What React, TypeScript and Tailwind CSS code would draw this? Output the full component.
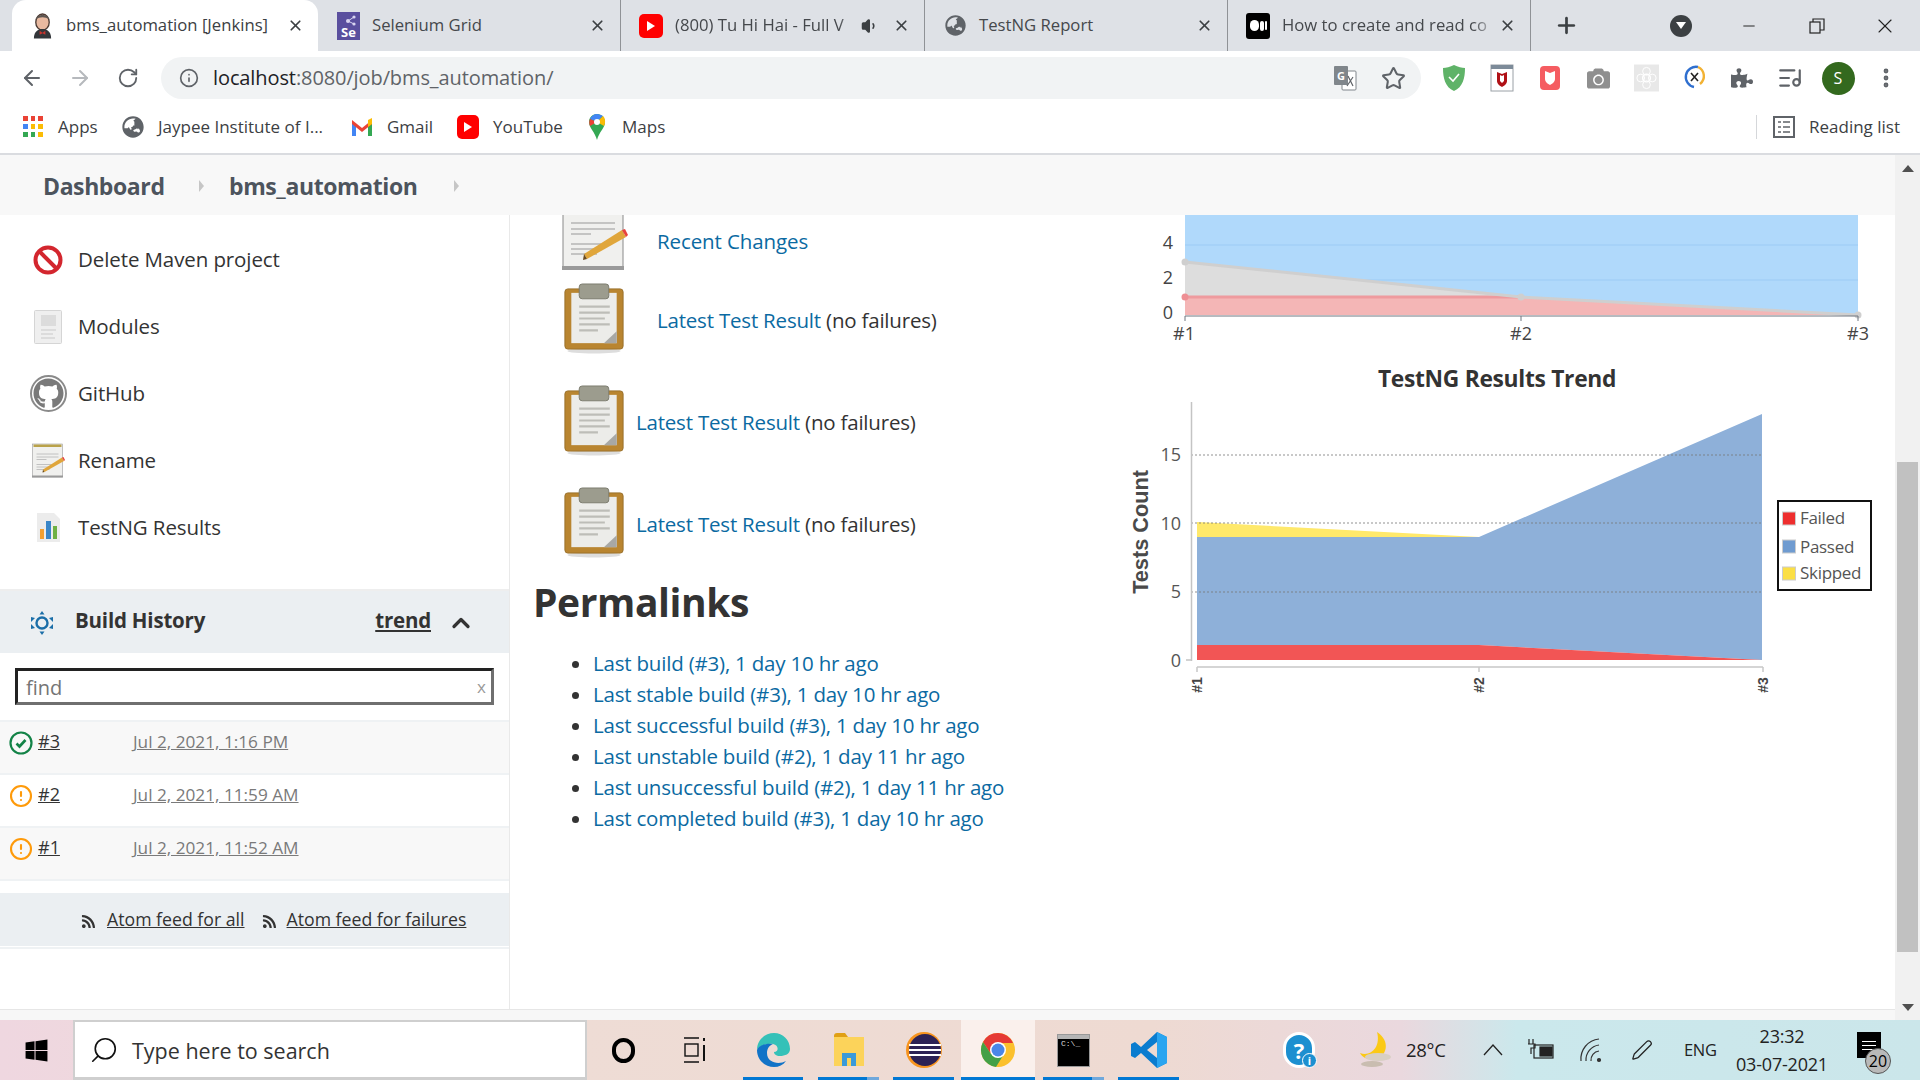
import { ReactNode } from 'react';
import {
  ArrowLeft,
  ArrowRight,
  ChevronUp,
  CircleAlert,
  EllipsisVertical,
  Info,
  ListMusic,
  Minus,
  Pen,
  Plus,
  RotateCw,
  Search,
  Star,
  Volume1,
  X,
} from 'lucide-react';
import { FaGithub, FaPuzzlePiece, FaRss, FaWindows, FaCamera, FaGlobeAsia } from 'react-icons/fa';

const JenkinsIcon = () => (
  <svg viewBox="0 0 24 26" className="w-[23px] h-[26px]">
    <ellipse cx="12" cy="9" rx="7" ry="8.5" fill="#e8b9a0" stroke="#4b3a33" strokeWidth="1.4" />
    <path d="M5 6 C6 0 18 0 19 6 C15 3 9 3 5 6Z" fill="#5c5550" />
    <path d="M3 26 C3 18 8 16 12 16 C16 16 21 18 21 26Z" fill="#33363a" />
    <path d="M9 18 L12 20 L15 18 L15 22 L12 20.5 L9 22Z" fill="#c8332d" />
  </svg>
);

const SeleniumIcon = () => (
  <svg viewBox="0 0 23 28" className="w-[23px] h-[28px]">
    <rect width="23" height="28" fill="#5a4f9e" />
    <path d="M11 9 L17 5 M11 9 L17 12" stroke="#d8d4f0" strokeWidth="1" />
    <circle cx="11" cy="9" r="2" fill="#d8d4f0" />
    <circle cx="17" cy="5" r="1.6" fill="#d8d4f0" />
    <circle cx="17" cy="12" r="1.6" fill="#d8d4f0" />
    <text x="11.5" y="25" fontSize="13" fontWeight="700" fill="#fff" textAnchor="middle">
      Se
    </text>
  </svg>
);

const YoutubeIcon = () => (
  <span className="w-[24px] h-[24px] rounded-[5px] bg-[#f00] flex items-center justify-center">
    <span className="w-0 h-0 border-y-[5px] border-y-transparent border-l-[8px] border-l-white" />
  </span>
);

const MediumIcon = () => (
  <span className="w-[24px] h-[26px] rounded-[3px] bg-black flex items-center justify-center gap-[1px]">
    <span className="w-[9px] h-[11px] rounded-full bg-white" />
    <span className="w-[4px] h-[10px] rounded-full bg-white" />
    <span className="w-[2px] h-[9px] rounded-full bg-white" />
  </span>
);

const GlobeIcon = ({ size = 22 }: { size?: number }) => <FaGlobeAsia size={size} color="#5f6368" />;

interface TabProps {
  title: string;
  icon: ReactNode;
  width: string;
  active?: boolean;
  audio?: boolean;
  fade?: boolean;
  divider?: boolean;
}

const Tab = ({ title, icon, width, active, audio, fade, divider }: TabProps) => (
  <div
    className={`${width} h-[51px] flex items-center pl-[18px] pr-[14px] relative shrink-0 ${
      active ? 'bg-white rounded-t-[14px]' : ''
    } ${divider ? 'border-r border-[#8f9296]' : ''}`}
  >
    <span className="w-[24px] flex items-center justify-center shrink-0">{icon}</span>
    <span
      className={`ml-[12px] flex-1 whitespace-nowrap pb-[2px] text-[16.7px] ${
        active ? 'text-[#3c4043]' : 'text-[#45484c]'
      } ${fade ? '[mask-image:linear-gradient(to_right,black_88%,transparent_99%)]' : ''}`}
    >
      {title}
    </span>
    {audio && <Volume1 size={18} className="mr-[14px] text-[#3c4043] fill-[#3c4043]" />}
    <X size={17} strokeWidth={2.4} className="text-[#3c4043] shrink-0" />
  </div>
);

const TabBar = () => (
  <div className="h-[51px] bg-[#dee1e6] flex items-center pl-[12px]">
    <Tab title="bms_automation [Jenkins]" icon={<JenkinsIcon />} width="w-[306px]" active />
    <Tab title="Selenium Grid" icon={<SeleniumIcon />} width="w-[303px]" divider />
    <Tab title="(800) Tu Hi Hai - Full V" icon={<YoutubeIcon />} width="w-[304px]" audio fade divider />
    <Tab title="TestNG Report" icon={<GlobeIcon size={21} />} width="w-[303px]" divider />
    <Tab title="How to create and read co" icon={<MediumIcon />} width="w-[303px]" fade divider />
    <div className="w-[70px] flex justify-center shrink-0">
      <Plus size={25} strokeWidth={2.6} className="text-[#3c4043]" />
    </div>
    <div className="ml-[69px] w-[22px] h-[22px] rounded-full bg-[#3c4043] flex items-center justify-center shrink-0">
      <span className="w-0 h-0 border-x-[5px] border-x-transparent border-t-[7px] border-t-white" />
    </div>
    <div className="ml-[23px] w-[68px] flex justify-center shrink-0">
      <Minus size={18} strokeWidth={1.3} className="text-[#222]" />
    </div>
    <div className="w-[68px] flex justify-center shrink-0">
      <svg viewBox="0 0 16 16" className="w-[16px] h-[16px]" fill="none" stroke="#222" strokeWidth="1.2">
        <rect x="1" y="4" width="10" height="11" />
        <path d="M4 4V1h11v11h-4" />
      </svg>
    </div>
    <div className="w-[68px] flex justify-center shrink-0">
      <X size={24} strokeWidth={1.1} className="text-[#222]" />
    </div>
  </div>
);

const ExtensionIcons = () => (
  <div className="ml-[9px] flex items-center">
    <div className="w-[48px] flex justify-center">
      <svg viewBox="0 0 24 28" className="w-[24px] h-[28px]">
        <path d="M12 1 C8 3 4 4 1 4 C1 14 3 23 12 27 C21 23 23 14 23 4 C20 4 16 3 12 1Z" fill="#5fb368" />
        <path d="M7 13 L11 17 L17 10" fill="none" stroke="#fff" strokeWidth="1.6" />
      </svg>
    </div>
    <div className="w-[48px] flex justify-center">
      <svg viewBox="0 0 24 28" className="w-[24px] h-[28px]">
        <rect x="1" y="1" width="22" height="26" fill="#fff" stroke="#9aa0a6" />
        <rect x="1" y="1" width="22" height="4" fill="#7d8b99" />
        <path d="M7 8 L12 10 L17 8 V17 C17 20 14 22 12 23 C10 22 7 20 7 17Z" fill="#b01116" />
        <path d="M10 11 L12 12 L14 11 V17 L12 19 L10 17Z" fill="#fff" />
      </svg>
    </div>
    <div className="w-[48px] flex justify-center">
      <svg viewBox="0 0 22 26" className="w-[22px] h-[26px]">
        <rect x="1" y="1" width="20" height="24" rx="4" fill="#f55c61" />
        <path d="M6 6 L11 8 L16 6 V14 C16 17 13 19 11 20 C9 19 6 17 6 14Z" fill="#fff" />
      </svg>
    </div>
    <div className="w-[48px] flex justify-center">
      <FaCamera size={23} color="#8f8f8f" />
    </div>
    <div className="w-[48px] flex justify-center">
      <svg viewBox="0 0 26 28" className="w-[25px] h-[28px]">
        <rect width="26" height="28" fill="#e8e8e8" />
        <circle cx="13" cy="14" r="4" fill="none" stroke="#fff" strokeWidth="1.5" />
        <circle cx="13" cy="7" r="4" fill="none" stroke="#fff" />
        <circle cx="13" cy="21" r="4" fill="none" stroke="#fff" />
        <circle cx="7" cy="14" r="4" fill="none" stroke="#fff" />
        <circle cx="19" cy="14" r="4" fill="none" stroke="#fff" />
      </svg>
    </div>
    <div className="w-[48px] flex justify-center">
      <svg viewBox="0 0 24 28" className="w-[24px] h-[28px]" fill="none">
        <path d="M16 3 A10 10 0 0 0 12 23" stroke="#2f6fcf" strokeWidth="2.4" />
        <path d="M16 3 A10 10 0 0 1 18 20" stroke="#f2b233" strokeWidth="2.4" />
        <path d="M9 9 L16 17 M16 9 L9 17" stroke="#222" strokeWidth="1.6" />
      </svg>
    </div>
    <div className="w-[48px] flex justify-center">
      <FaPuzzlePiece size={22} color="#5f6368" />
    </div>
    <div className="w-[48px] flex justify-center">
      <ListMusic size={26} color="#5f6368" />
    </div>
    <div className="w-[48px] flex justify-center">
      <span className="w-[33px] h-[33px] rounded-full bg-[#33691e] text-white text-[16px] flex items-center justify-center">
        S
      </span>
    </div>
    <div className="w-[48px] flex justify-center">
      <EllipsisVertical size={24} strokeWidth={2.8} color="#5f6368" />
    </div>
  </div>
);

const Toolbar = () => (
  <div className="h-[51px] bg-white flex items-center pl-[8px] pt-[3px]">
    <div className="w-[48px] flex justify-center">
      <ArrowLeft size={24} strokeWidth={2} color="#5f6368" />
    </div>
    <div className="w-[48px] flex justify-center">
      <ArrowRight size={24} strokeWidth={2} color="#b6b9bd" />
    </div>
    <div className="w-[48px] flex justify-center">
      <RotateCw size={22} strokeWidth={2} color="#5f6368" />
    </div>
    <div className="ml-[9px] w-[1260px] h-[42px] rounded-full bg-[#f1f3f4] flex items-center pl-[18px] pr-[15px]">
      <Info size={20} color="#5f6368" strokeWidth={2} />
      <span className="ml-[14px] text-[20px] tracking-[-0.1px]">
        <span className="text-[#202124]">localhost</span>
        <span className="text-[#5f6368]">:8080/job/bms_automation/</span>
      </span>
      <svg viewBox="0 0 24 28" className="ml-auto w-[24px] h-[28px]">
        <rect x="9" y="7" width="14" height="19" rx="1" fill="#fff" stroke="#80868b" />
        <rect x="1" y="2" width="14" height="19" rx="1" fill="#80868b" />
        <text x="8" y="16" fontSize="11" fontWeight="700" fill="#fff" textAnchor="middle">
          G
        </text>
        <path d="M15 12 L20 22 M20 13 L14 22" stroke="#5f6368" strokeWidth="1.2" />
      </svg>
      <Star size={25} strokeWidth={2} color="#5f6368" className="ml-[24px]" />
    </div>
    <ExtensionIcons />
  </div>
);

const Bookmark = ({ icon, label, width }: { icon: ReactNode; label: string; width: string }) => (
  <div className={`${width} flex items-center shrink-0`}>
    <span className="w-[22px] flex justify-center shrink-0">{icon}</span>
    <span className="ml-[14px] text-[17px] text-[#3c4043] whitespace-nowrap">{label}</span>
  </div>
);

const AppsIcon = () => (
  <span className="grid grid-cols-3 gap-[3px] w-[20px]">
    {['#ea4335', '#ea4335', '#ea4335', '#4285f4', '#fbbc05', '#fbbc05', '#34a853', '#34a853', '#fbbc05'].map((c, i) => (
      <span key={i} className="w-[4.5px] h-[5px]" style={{ backgroundColor: c }} />
    ))}
  </span>
);

const GmailIcon = () => (
  <svg viewBox="0 0 22 22" className="w-[22px] h-[22px]">
    <path d="M1 5 V20 H5 V9Z" fill="#4285f4" />
    <path d="M21 5 V20 H17 V9Z" fill="#34a853" />
    <path d="M1 4 L11 12 L21 4 V8 L11 16 L1 8Z" fill="#ea4335" />
    <path d="M17 4 L21 2 V8 L17 11Z" fill="#fbbc05" />
  </svg>
);

const MapsIcon = () => (
  <svg viewBox="0 0 18 28" className="w-[18px] h-[28px]">
    <path d="M9 1 C4 1 1 5 1 9 C1 15 7 19 9 27 C11 19 17 15 17 9 C17 5 14 1 9 1Z" fill="#34a853" />
    <path d="M9 1 C6 1 3 3 2 6 L9 9 L15 3 C13 2 11 1 9 1Z" fill="#4285f4" />
    <path d="M2 6 C1 8 1 11 2 13 L9 9Z" fill="#ea4335" />
    <path d="M15 3 L9 9 L16 13 C18 9 17 5 15 3Z" fill="#fbbc05" />
    <circle cx="9" cy="9" r="3" fill="#fff" />
  </svg>
);

const Bookmarks = () => (
  <div className="h-[51px] bg-white flex items-center pl-[22px] pr-[20px] pb-[2px]">
    <Bookmark icon={<AppsIcon />} label="Apps" width="w-[100px]" />
    <Bookmark icon={<GlobeIcon />} label="Jaypee Institute of I..." width="w-[229px]" />
    <Bookmark icon={<GmailIcon />} label="Gmail" width="w-[106px]" />
    <Bookmark icon={<YoutubeIcon />} label="YouTube" width="w-[129px]" />
    <Bookmark icon={<MapsIcon />} label="Maps" width="w-[70px]" />
    <div className="ml-auto h-[24px] border-l border-[#d5d7da]" />
    <svg viewBox="0 0 22 22" className="ml-[16px] w-[22px] h-[22px]" fill="none" stroke="#5f6368" strokeWidth="2">
      <rect x="1" y="1" width="20" height="20" />
      <path d="M5 6h3M10 6h7M5 11h3M10 11h7M5 16h3M10 16h7" strokeWidth="1.6" />
    </svg>
    <span className="ml-[14px] text-[17px] text-[#3c4043]">Reading list</span>
  </div>
);

const Crumb = () => (
  <span className="w-0 h-0 border-y-[6px] border-y-transparent border-l-[5px] border-l-[#c6c6c6]" />
);

const Breadcrumbs = () => (
  <div className="h-[60px] bg-[#f8f8f8] flex items-center pl-[43px] pt-[2px] text-[#4d545d] font-bold text-[23px] tracking-[-0.4px]">
    <span className="w-[156px]">Dashboard</span>
    <Crumb />
    <span className="ml-[25px] w-[225px]">bms_automation</span>
    <Crumb />
  </div>
);

const NotepadIcon = ({ className, viewBox }: { className: string; viewBox: string }) => (
  <svg viewBox={viewBox} className={className}>
    <rect x="1" y="-12" width="60" height="66" fill="#f0f0ee" stroke="#8a8a8a" />
    <rect x="3" y="-11" width="56" height="5" fill="#b9a24a" />
    <rect x="0" y="51" width="62" height="4" fill="#9a9a9a" />
    <path d="M9 8h44M9 14h44M9 19h20M9 29h30M9 34h26M9 39h26" stroke="#b5b5b5" strokeWidth="1.6" />
    <polygon points="22,39 25,44 64,22 60,15" fill="#e0a63b" />
    <polygon points="22,39 21,45 25,44" fill="#6b4b1e" />
    <polygon points="60,15 64,22 66,20 63,14" fill="#e8423c" />
  </svg>
);

const ClipboardIcon = () => (
  <svg viewBox="0 0 60 72" className="w-[60px] h-[71px] shrink-0">
    <ellipse cx="30" cy="69" rx="27" ry="2.5" fill="#ddd" />
    <rect x="0.5" y="6" width="59" height="61" rx="3" fill="#b98530" stroke="#99702b" />
    <rect x="7" y="10" width="46" height="51" fill="#ecece9" />
    <rect x="15" y="1" width="30" height="15" rx="3" fill="#9c9c8e" stroke="#7d7d70" />
    <path d="M15 24h31M15 30h31M15 36h26M15 42h31M15 48h19" stroke="#bdbdb8" strokeWidth="2.2" />
    <polygon points="40,61 53,61 53,49" fill="#a8a8a5" />
  </svg>
);

const DeleteIcon = () => (
  <svg viewBox="0 0 32 32" className="w-[32px] h-[32px]">
    <circle cx="16" cy="16" r="12.5" fill="#fff" stroke="#d3262e" strokeWidth="4" />
    <path d="M7 7 L25 25" stroke="#d3262e" strokeWidth="4" />
  </svg>
);

const ModulesIcon = () => (
  <svg viewBox="0 0 28 34" className="w-[28px] h-[34px]">
    <rect x="0.5" y="0.5" width="27" height="33" rx="1" fill="#efefef" stroke="#d5d5d5" />
    <rect x="7" y="5" width="15" height="11" fill="#dcdcdc" />
    <path d="M7 20h15M7 24h12M7 28h14" stroke="#dcdcdc" strokeWidth="2" />
  </svg>
);

const GithubIcon = () => (
  <span className="w-[37px] h-[37px] rounded-full border-2 border-[#8a8a8a] bg-white flex items-center justify-center">
    <FaGithub size={31} color="#7a7a7a" />
  </span>
);

const ChartDocIcon = () => (
  <svg viewBox="0 0 24 30" className="w-[24px] h-[30px]">
    <polygon points="1,0 18,0 24,6 24,29 1,29" fill="#ececec" />
    <rect x="4" y="16" width="4" height="10" fill="#f2a033" />
    <rect x="10" y="8" width="5" height="18" fill="#3a86c8" />
    <rect x="17" y="13" width="4" height="13" fill="#6eb043" />
  </svg>
);

const menuItems = [
  { label: 'Delete Maven project', icon: <DeleteIcon /> },
  { label: 'Modules', icon: <ModulesIcon /> },
  { label: 'GitHub', icon: <GithubIcon /> },
  { label: 'Rename', icon: <NotepadIcon viewBox="0 -14 66 70" className="w-[35px] h-[35px]" /> },
  { label: 'TestNG Results', icon: <ChartDocIcon /> },
];

const builds = [
  { id: '#3', date: 'Jul 2, 2021, 1:16 PM', ok: true },
  { id: '#2', date: 'Jul 2, 2021, 11:59 AM', ok: false },
  { id: '#1', date: 'Jul 2, 2021, 11:52 AM', ok: false },
];

const BuildRow = ({ id, date, ok, odd }: { id: string; date: string; ok: boolean; odd: boolean }) => (
  <div className={`h-[53px] flex pl-[9px] border-t-2 border-[#eff2f4] ${odd ? 'bg-[#f8f8f8]' : 'bg-white'}`}>
    <span className="w-[24px] h-[24px] mt-[9px] shrink-0">
      {ok ? (
        <svg viewBox="0 0 24 24" className="w-[24px] h-[24px]" fill="none" stroke="#138347" strokeWidth="2.2">
          <circle cx="12" cy="12" r="10.5" />
          <path d="M7.5 12.5 L10.5 15.5 L16.5 9" strokeWidth="2.6" />
        </svg>
      ) : (
        <CircleAlert size={24} strokeWidth={2.1} color="#fe9a0a" />
      )}
    </span>
    <a className="ml-[5px] mt-[7px] w-[95px] text-[18px] leading-[25px] text-[#333] underline">{id}</a>
    <a className="mt-[7px] text-[17.2px] leading-[25px] text-[#7a7a7a] underline whitespace-nowrap">{date}</a>
  </div>
);

const Sidebar = () => (
  <aside className="w-[510px] shrink-0 border-r border-[#e9e9e9] flex flex-col">
    <div className="pt-[11px]">
      {menuItems.map((item) => (
        <div key={item.label} className="h-[67px] flex items-center">
          <span className="w-[96px] flex justify-center shrink-0">{item.icon}</span>
          <span className="-ml-[18px] text-[20.5px] text-[#333] tracking-[-0.1px]">{item.label}</span>
        </div>
      ))}
    </div>
    <div className="mt-[28px] h-[64px] border-t-2 border-[#eeeeee] bg-[#ebeff2] flex items-center pl-[30px] pb-[3px]">
      <svg viewBox="0 0 24 24" className="w-[24px] h-[24px] mt-[4px]" fill="#1a6ea8">
        <circle cx="12" cy="12" r="5.5" fill="none" stroke="#1a6ea8" strokeWidth="2.4" />
        <polygon points="12,0 9.5,3.5 14.5,3.5" />
        <polygon points="12,24 9.5,20.5 14.5,20.5" />
        <polygon points="1,6 1,11 5,7" />
        <polygon points="23,6 23,11 19,7" />
        <polygon points="1,18 1,13 5,17" />
        <polygon points="23,18 23,13 19,17" />
      </svg>
      <span className="ml-[21px] text-[20.5px] font-bold text-[#333] tracking-[-0.2px]">Build History</span>
      <span className="ml-auto text-[20.5px] font-bold text-[#333] underline tracking-[-0.2px]">trend</span>
      <ChevronUp size={28} strokeWidth={2.8} color="#333" className="ml-[16px] mr-[34px] mt-[4px]" />
    </div>
    <div className="h-[67px] pt-[15px] pl-[15px]">
      <div className="w-[479px] h-[37px] border-[3px] border-t-[#222] border-l-[#222] border-r-[#6f6f6f] border-b-[#6f6f6f] flex items-center pl-[8px] pr-[5px]">
        <span className="text-[20px] text-[#757575] pt-[2px]">find</span>
        <span className="ml-auto text-[17px] text-[#999]">x</span>
      </div>
    </div>
    {builds.map((b, i) => (
      <BuildRow key={b.id} id={b.id} date={b.date} ok={b.ok} odd={i % 2 === 0} />
    ))}
    <div className="border-t-2 border-[#eff2f4]" />
    <div className="mt-[12px] h-[53px] bg-[#ebeff2] flex items-center pl-[81px] text-[17.7px] text-[#333]">
      <FaRss size={15} className="mt-[4px]" />
      <a className="ml-[11px] underline whitespace-nowrap">Atom feed for all</a>
      <FaRss size={15} className="ml-[17px] mt-[4px]" />
      <a className="ml-[10px] underline whitespace-nowrap">Atom feed for failures</a>
    </div>
    <div className="mt-[1px] border-t-2 border-[#eff2f4]" />
  </aside>
);

const permalinks = [
  'Last build (#3), 1 day 10 hr ago',
  'Last stable build (#3), 1 day 10 hr ago',
  'Last successful build (#3), 1 day 10 hr ago',
  'Last unstable build (#2), 1 day 11 hr ago',
  'Last unsuccessful build (#2), 1 day 11 hr ago',
  'Last completed build (#3), 1 day 10 hr ago',
];

const TestResultRow = ({ gap, className }: { gap: string; className: string }) => (
  <div className={`h-[71px] flex items-center ml-[54px] ${className}`}>
    <ClipboardIcon />
    <span className={`${gap} pt-[3px] text-[20.5px] tracking-[-0.2px] text-[#333] whitespace-nowrap`}>
      <a className="text-[#0b6aa2]">Latest Test Result</a> (no failures)
    </span>
  </div>
);

const Center = () => (
  <section className="w-[590px] shrink-0">
    <div className="h-[57px] ml-[52px] flex items-end overflow-hidden">
      <NotepadIcon viewBox="0 0 66 57" className="w-[66px] h-[57px] shrink-0" />
      <a className="ml-[29px] mb-[15px] text-[20.5px] tracking-[-0.1px] text-[#0b6aa2]">Recent Changes</a>
    </div>
    <TestResultRow gap="ml-[33px]" className="mt-[11px]" />
    <TestResultRow gap="ml-[12px]" className="mt-[31px]" />
    <TestResultRow gap="ml-[12px]" className="mt-[31px]" />
    <h1 className="ml-[23px] mt-[17px] text-[39px] leading-[54px] font-bold text-[#333] tracking-[-0.4px]">
      Permalinks
    </h1>
    <ul className="ml-[83px] mt-[19px] list-disc marker:text-[#333] text-[20.5px] tracking-[-0.2px] text-[#0b6aa2]">
      {permalinks.map((p) => (
        <li key={p} className="h-[31px] leading-[31px]">
          {p}
        </li>
      ))}
    </ul>
  </section>
);

const Charts = () => (
  <svg viewBox="1100 215 795 500" className="w-[795px] h-[500px] shrink-0" fontFamily="'Open Sans', sans-serif">
    {/* build time trend, scrolled so its top is cut off */}
    <rect x="1185" y="215" width="673" height="100" fill="#b0d9fb" />
    <path d="M1185 245H1858M1185 280H1858" stroke="#a3d0f7" strokeWidth="1.5" />
    <polygon points="1185,262 1521,297 1858,315 1185,315" fill="#dddddd" />
    <polygon points="1185,297 1521,297 1858,315 1185,315" fill="#f4b6b6" />
    <polyline points="1185,297 1521,297" fill="none" stroke="#ee9a9e" strokeWidth="3" />
    <polyline points="1185,262 1521,297 1858,315" fill="none" stroke="#cfcfcf" strokeWidth="3" />
    <circle cx="1185" cy="297" r="3.5" fill="#ee8f94" />
    <circle cx="1185" cy="262" r="3.5" fill="#cfcfcf" />
    <circle cx="1521" cy="297" r="3.5" fill="#cfcfcf" />
    <circle cx="1858" cy="315" r="3.5" fill="#cfcfcf" />
    <path d="M1185 316H1858M1185 316v5M1521 316v5M1858 316v5" stroke="#6e7680" strokeWidth="1" />
    <g fontSize="18" fill="#444" textAnchor="middle">
      <text x="1168" y="249">4</text>
      <text x="1168" y="284">2</text>
      <text x="1168" y="319">0</text>
      <text x="1184" y="340">#1</text>
      <text x="1521" y="340">#2</text>
      <text x="1858" y="340">#3</text>
    </g>

    <text x="1497" y="387" fontSize="22.8" fontWeight="700" fill="#333" textAnchor="middle" letterSpacing="-0.3">
      TestNG Results Trend
    </text>

    {/* TestNG chart */}
    <polygon points="1197,522 1479,537 1197,537" fill="#ffe96b" />
    <polygon points="1197,537 1479,537 1762,414 1762,660 1479,645 1197,645" fill="#8eb0d9" />
    <polygon points="1197,645 1479,645 1762,660 1197,660" fill="#f25555" />
    <path d="M1191 455H1762M1191 523H1762M1191 592H1762" stroke="#777" strokeDasharray="2 2" opacity="0.8" />
    <path d="M1191.5 402V661M1186 660H1191.5" stroke="#c4c4c4" strokeWidth="1.5" fill="none" />
    <path d="M1197 667H1763M1197 667v5M1479 667v5M1763 667v5" stroke="#c8c8c8" strokeWidth="1.5" fill="none" />
    <g fontSize="18" fill="#555" textAnchor="end">
      <text x="1181" y="461">15</text>
      <text x="1181" y="530">10</text>
      <text x="1181" y="598">5</text>
      <text x="1181" y="667">0</text>
    </g>
    <g fontSize="14" fontWeight="700" fill="#444" textAnchor="middle" fontFamily="'Liberation Sans', sans-serif">
      <text transform="translate(1202 685) rotate(-90)">#1</text>
      <text transform="translate(1484 685) rotate(-90)">#2</text>
      <text transform="translate(1768 685) rotate(-90)">#3</text>
    </g>
    <text
      transform="translate(1148 532) rotate(-90)"
      fontSize="21.7"
      fontWeight="700"
      fill="#4a4a4a"
      textAnchor="middle"
      fontFamily="'Liberation Sans', sans-serif"
    >
      Tests Count
    </text>
    <rect x="1778" y="501" width="93" height="89" fill="#fff" stroke="#111" strokeWidth="2" />
    <rect x="1782.5" y="512" width="13" height="13" fill="#ee2e2e" stroke="#ccc" />
    <rect x="1782.5" y="540" width="13" height="13" fill="#6f9bd0" stroke="#ccc" />
    <rect x="1782.5" y="567" width="13" height="13" fill="#fbdf45" stroke="#ccc" />
    <g fontSize="17" fill="#555" letterSpacing="-0.3">
      <text x="1800" y="524">Failed</text>
      <text x="1800" y="553">Passed</text>
      <text x="1800" y="579">Skipped</text>
    </g>
  </svg>
);

const Scrollbar = () => (
  <div className="w-[25px] bg-[#f1f1f1] flex flex-col items-center shrink-0">
    <div className="h-[26px] flex items-center justify-center">
      <span className="w-0 h-0 border-x-[6px] border-x-transparent border-b-[7px] border-b-[#505050]" />
    </div>
    <div className="mt-[281px] w-[21px] h-[490px] bg-[#c1c1c1]" />
    <div className="mt-auto h-[26px] flex items-center justify-center">
      <span className="w-0 h-0 border-x-[6px] border-x-transparent border-t-[7px] border-t-[#505050]" />
    </div>
  </div>
);

const EdgeIcon = () => (
  <svg viewBox="0 0 36 36" className="w-[36px] h-[36px]">
    <path d="M2 18 C2 8 10 1 19 1 C28 1 35 8 35 17 C35 22 30 24 25 24 C21 24 19 22 19 20 C24 20 24 13 18 12 C10 11 2 16 2 18Z" fill="#35c1b8" />
    <path d="M2 18 C2 28 10 35 19 35 C24 35 28 33 31 29 C24 33 12 31 12 21 C12 16 15 13 18 12 C10 11 3 14 2 18Z" fill="#1173c7" />
  </svg>
);

const ExplorerIcon = () => (
  <svg viewBox="0 0 32 36" className="w-[32px] h-[36px]">
    <path d="M1 4 Q1 1 4 1 H12 L15 5 H1Z" fill="#e0a015" />
    <rect x="1" y="5" width="30" height="29" fill="#fcd35a" />
    <path d="M9 34 V21 H23 V34 H18 V26 H14 V34Z" fill="#3a9ad9" />
  </svg>
);

const EclipseIcon = () => (
  <svg viewBox="0 0 36 36" className="w-[36px] h-[36px]">
    <circle cx="18" cy="18" r="18" fill="#f7941e" />
    <circle cx="19" cy="18" r="16" fill="#2c2255" />
    <path d="M3 13H35M3 18H35M3 23H35" stroke="#fff" strokeWidth="2.2" />
  </svg>
);

const ChromeIcon = () => (
  <svg viewBox="0 0 36 36" className="w-[36px] h-[36px]">
    <circle cx="18" cy="18" r="17" fill="#fbc02d" />
    <path d="M18 1 A17 17 0 0 0 3 10 L11 22 L18 11 H33 A17 17 0 0 0 18 1Z" fill="#e53935" />
    <path d="M3 10 A17 17 0 0 0 16 35 L24 22 L11 22Z" fill="#43a047" />
    <circle cx="18" cy="18" r="8" fill="#fff" />
    <circle cx="18" cy="18" r="6.5" fill="#4a86e8" />
  </svg>
);

const TerminalIcon = () => (
  <span className="w-[33px] h-[33px] border border-[#999] bg-black flex flex-col">
    <span className="h-[4px] bg-[#b5b5b5]" />
    <span className="text-[#ddd] text-[8px] leading-[10px] pl-[3px] font-['Liberation_Mono',monospace]">C:\_</span>
  </span>
);

const VscodeIcon = () => (
  <svg viewBox="0 0 36 36" className="w-[36px] h-[36px]">
    <path fillRule="evenodd" d="M26 0 L36 5 V31 L26 36 L10 21 L4 26 L0 24 V12 L4 10 L10 15 Z M26 10 L16 18 L26 26 Z" fill="#0a7ccf" />
    <path d="M26 0 L36 5 V31 L26 36 Z" fill="#2aa5f0" />
  </svg>
);

const Underbar = ({ twoTone }: { twoTone?: boolean }) => (
  <span className={`absolute bottom-0 left-0 right-0 h-[3px] ${twoTone ? 'bg-[linear-gradient(90deg,#0078d4_80%,#6fa8dc_80%)]' : 'bg-[#0078d4]'}`} />
);

const AppCell = ({ icon, className, twoTone }: { icon: ReactNode; className: string; twoTone?: boolean }) => (
  <div className={`relative h-[60px] flex items-center justify-center shrink-0 ${className}`}>
    {icon}
    <Underbar twoTone={twoTone} />
  </div>
);

const Taskbar = () => (
  <footer className="h-[60px] flex items-center bg-[linear-gradient(90deg,#efd7e0_0%,#eedcd5_30%,#eedad2_60%,#ead8de_73%,#cbe8ec_79%,#cbe6ea_100%)]">
    <div className="w-[73px] flex justify-center shrink-0">
      <FaWindows size={25} color="#000" />
    </div>
    <div className="w-[514px] h-[60px] bg-white border-2 border-[#cfcfcf] border-b-[3px] flex items-center pl-[14px] shrink-0">
      <Search size={30} strokeWidth={1.3} className="-scale-x-100 text-[#111]" />
      <span className="ml-[13px] pt-[3px] text-[21.5px] text-[#333]">Type here to search</span>
    </div>
    <div className="w-[72px] flex justify-center shrink-0">
      <span className="w-[23px] h-[25px] rounded-full border-[4px] border-black" />
    </div>
    <div className="w-[72px] flex justify-center shrink-0">
      <svg viewBox="0 0 24 26" className="w-[24px] h-[26px]" fill="none" stroke="#111" strokeWidth="1.4">
        <path d="M1 1H16M1 25H16" />
        <rect x="2" y="7" width="13" height="12" />
        <path d="M21 1v3M21 8v16" strokeWidth="2" />
      </svg>
    </div>
    <AppCell icon={<EdgeIcon />} className="ml-[12px] w-[60px]" />
    <AppCell icon={<ExplorerIcon />} className="ml-[15px] w-[61px]" twoTone />
    <AppCell icon={<EclipseIcon />} className="ml-[14px] w-[61px]" />
    <AppCell icon={<ChromeIcon />} className="ml-[7px] w-[74px] bg-[#faf0ec]" />
    <AppCell icon={<TerminalIcon />} className="ml-[8px] w-[61px]" twoTone />
    <AppCell icon={<VscodeIcon />} className="ml-[14px] w-[61px]" />
    <div className="ml-[100px] w-[40px] flex justify-center shrink-0">
      <span className="relative w-[32px] h-[36px] rounded-full bg-[#1c8fd0] border-[3px] border-white text-white text-[22px] font-bold flex items-center justify-center">
        ?
        <span className="absolute -right-[5px] -bottom-[3px] w-[15px] h-[15px] rounded-full bg-[#1c8fd0] border border-white text-[11px] leading-none flex items-center justify-center">
          i
        </span>
      </span>
    </div>
    <svg viewBox="0 0 36 38" className="ml-[38px] w-[36px] h-[38px] shrink-0">
      <path d="M20 1 C34 10 30 26 18 28 C10 29 5 26 3 22 C14 26 24 16 20 1Z" fill="#fbc916" />
      <ellipse cx="21" cy="26" rx="13" ry="4" fill="#d8cfc4" />
      <ellipse cx="15" cy="33" rx="11" ry="3" fill="#c9bdb0" />
    </svg>
    <span className="ml-[13px] w-[44px] text-[18.5px] text-[#222] tracking-[-0.3px] whitespace-nowrap shrink-0">28°C</span>
    <svg viewBox="0 0 20 12" className="ml-[33px] w-[20px] h-[12px] shrink-0" fill="none" stroke="#222" strokeWidth="1.3">
      <path d="M1 11 L10 1 L19 11" />
    </svg>
    <svg viewBox="0 0 26 24" className="ml-[25px] w-[26px] h-[24px] shrink-0" fill="none" stroke="#222" strokeWidth="1.2">
      <rect x="6" y="7" width="19" height="13" />
      <rect x="12" y="9" width="12" height="9" fill="#222" />
      <path d="M1 1v5M5 1v5M0 6h7v4H3v6" />
    </svg>
    <svg viewBox="0 0 24 26" className="ml-[25px] w-[24px] h-[26px] shrink-0" fill="none" stroke="#333" strokeWidth="1.2">
      <path d="M2 24 A20 20 0 0 1 20 2M7 24 A15 15 0 0 1 20 8M12 24 A9 9 0 0 1 20 14" />
      <circle cx="20" cy="23" r="1.5" fill="#333" />
    </svg>
    <Pen size={22} strokeWidth={1.4} className="ml-[28px] text-[#222] shrink-0" />
    <span className="ml-[31px] w-[40px] text-[16.5px] text-[#222] tracking-[-0.3px] shrink-0">ENG</span>
    <div className="ml-[10px] w-[96px] flex flex-col items-center text-[18px] text-[#222] leading-[28px] tracking-[-0.2px] shrink-0">
      <span>23:32</span>
      <span className="whitespace-nowrap">03-07-2021</span>
    </div>
    <div className="relative ml-[27px] w-[24px] h-[26px] mb-[10px] bg-black flex flex-col gap-[3px] items-center justify-center shrink-0">
      <span className="w-[14px] border-t border-white" />
      <span className="w-[14px] border-t border-white" />
      <span className="w-[14px] border-t border-white" />
      <span className="absolute -right-[10px] -bottom-[16px] w-[26px] h-[26px] rounded-full bg-[#b9b9b9] border border-[#555] text-[16px] text-black flex items-center justify-center">
        20
      </span>
    </div>
  </footer>
);

const App = () => {
  return (
    <div className="w-[1920px] h-[1080px] overflow-hidden bg-white flex flex-col font-['Open_Sans',sans-serif]">
      <TabBar />
      <Toolbar />
      <Bookmarks />
      <div className="h-[2px] bg-[#dadce0]" />
      <div className="h-[865px] flex">
        <div className="w-[1895px] flex flex-col shrink-0">
          <Breadcrumbs />
          <div className="flex-1 flex overflow-hidden">
            <Sidebar />
            <Center />
            <Charts />
          </div>
          <div className="h-[11px] bg-[#f7f7f7] border-t border-[#e6e6e6]" />
        </div>
        <Scrollbar />
      </div>
      <Taskbar />
    </div>
  );
};

export default App;
